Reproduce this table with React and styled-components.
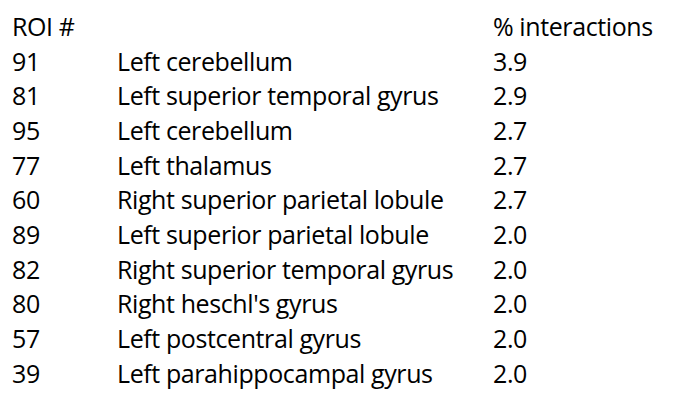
import styled, { createGlobalStyle } from 'styled-components'

const GlobalStyle = createGlobalStyle`
  html, body {
    margin: 0;
    padding: 0;
    background: #ffffff;
  }
`

const rows = [
  { roi: '91', region: 'Left cerebellum', pct: '3.9' },
  { roi: '81', region: 'Left superior temporal gyrus', pct: '2.9' },
  { roi: '95', region: 'Left cerebellum', pct: '2.7' },
  { roi: '77', region: 'Left thalamus', pct: '2.7' },
  { roi: '60', region: 'Right superior parietal lobule', pct: '2.7' },
  { roi: '89', region: 'Left superior parietal lobule', pct: '2.0' },
  { roi: '82', region: 'Right superior temporal gyrus', pct: '2.0' },
  { roi: '80', region: "Right heschl's gyrus", pct: '2.0' },
  { roi: '57', region: 'Left postcentral gyrus', pct: '2.0' },
  { roi: '39', region: 'Left parahippocampal gyrus', pct: '2.0' },
]

const S = {
  Table: styled.div`
    width: 675px;
    height: 410px;
    box-sizing: border-box;
    padding: 9px 0 0 12px;
    display: grid;
    grid-template-columns: 105px 376px auto;
    grid-auto-rows: 34.67px;
    font-family: 'Open Sans', Lato, sans-serif;
    font-size: 25px;
    letter-spacing: -0.4px;
    line-height: 34.67px;
    font-variant-ligatures: none;
    color: #000;
    background: #fff;
  `,
  Cell: styled.div`
    white-space: nowrap;
  `,
}

const App = () => {
  return (
    <>
      <GlobalStyle />
      <S.Table>
        <S.Cell>ROI #</S.Cell>
        <S.Cell />
        <S.Cell>% interactions</S.Cell>
        {rows.map(({ roi, region, pct }) => (
          <>
            <S.Cell key={roi + 'a'}>{roi}</S.Cell>
            <S.Cell key={roi + 'b'}>{region}</S.Cell>
            <S.Cell key={roi + 'c'}>{pct}</S.Cell>
          </>
        ))}
      </S.Table>
    </>
  )
}

export default App
